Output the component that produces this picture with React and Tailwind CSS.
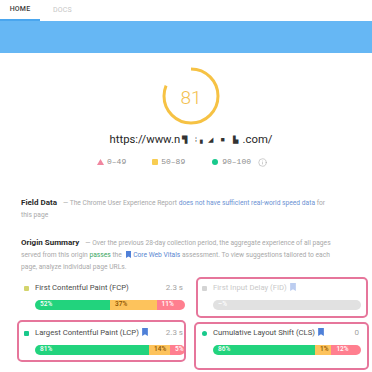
import React from 'react';
import { Info } from 'lucide-react';

const tones = {
  good: 'bg-[#22d37d] text-white',
  avg: 'bg-[#fdc35c] text-[#8a5300]',
  poor: 'bg-[#ff7f8f] text-white',
  none: 'bg-[#e1e1e1] text-white',
};

const metrics = [
  {
    name: 'First Contentful Paint (FCP)',
    value: '2.3 s',
    markerClass: 'bg-[#d3d46c] rounded-[1px]',
    segments: [
      { label: '52%', width: 50, tone: 'good' },
      { label: '37%', width: 31, tone: 'avg' },
      { label: '11%', width: 19, tone: 'poor' },
    ],
  },
  {
    name: 'First Input Delay (FID)',
    faded: true,
    badge: true,
    markerClass: 'bg-[#d4d4d4] rounded-[1px]',
    box: 'left-[1px] -right-[6px] -top-[5px] h-[41px]',
    segments: [{ label: '–%', width: 100, tone: 'none' }],
  },
  {
    name: 'Largest Contentful Paint (LCP)',
    value: '2.3 s',
    badge: true,
    markerClass: 'bg-[#18c98b] rounded-[1px]',
    box: 'left-0 right-0 -top-[7px] h-[42px]',
    segments: [
      { label: '81%', width: 76, tone: 'good' },
      { label: '14%', width: 14, tone: 'avg' },
      { label: '5%', width: 10, tone: 'poor' },
    ],
  },
  {
    name: 'Cumulative Layout Shift (CLS)',
    value: '0',
    badge: true,
    markerClass: 'bg-[#18c98b] rounded-full',
    box: '-left-[1px] -right-[7px] -top-[5px] h-[48px]',
    segments: [
      { label: '86%', width: 69, tone: 'good' },
      { label: '1%', width: 11, tone: 'avg' },
      { label: '12%', width: 20, tone: 'poor' },
    ],
  },
];

const Badge = ({ faded, big }) => (
  <svg
    width={big ? 6 : 5}
    height={big ? 8 : 7}
    viewBox="0 0 5 7"
    className="inline-block ml-[3px] align-[-1px]"
  >
    <path d="M0 0h5v7L2.5 5.4 0 7z" fill={faded ? '#bccdf0' : '#4f80d8'} />
  </svg>
);

const Metric = ({ m }) => (
  <div className="relative h-[45px]">
    {m.box && <div className={`absolute rounded-[5px] border-2 border-[#e6769b] pointer-events-none ${m.box}`} />}
    <div className="flex items-center h-[12px] pr-[3px]">
      <div className="w-[18px] pl-[7px] flex items-center">
        <span className={`block w-[5px] h-[5px] ${m.markerClass}`} />
      </div>
      <span className={`text-[7.7px] whitespace-nowrap ${m.faded ? 'text-[#c9c9c9]' : 'text-[#4a4a4a]'}`}>
        {m.name}
        {m.badge && <Badge faded={m.faded} big />}
      </span>
      {m.value && <span className="ml-auto whitespace-nowrap text-[8px] text-[#a3a3a3]">{m.value}</span>}
    </div>
    <div className="mt-[6px] ml-[18px] mr-[1px] h-[10px] rounded-full overflow-hidden flex">
      {m.segments.map((s) => (
        <div
          key={s.label}
          className={`h-full flex items-center pl-[5px] text-[6.5px] font-medium ${tones[s.tone]}`}
          style={{ width: `${s.width}%` }}
        >
          {s.label}
        </div>
      ))}
    </div>
  </div>
);

export default function App() {
  return (
    <div className="w-[372px] h-[372px] overflow-hidden bg-white font-[Roboto,sans-serif]">
      {/* tabs */}
      <div className="h-[21px] flex">
        <div className="w-[40px] h-full flex items-center justify-center border-b-2 border-[#4aa6ee] text-[7px] font-medium text-[#3d3d3d] tracking-[0.2px]">
          HOME
        </div>
        <div className="w-[45px] h-full flex items-center justify-center text-[7px] text-[#c6c6c6] tracking-[0.2px]">
          DOCS
        </div>
      </div>
      <div className="h-[32px] bg-[#66b7f4]" />

      {/* score */}
      <div className="pl-[10px] flex flex-col items-center">
        <div className="relative mt-[13px] w-[60px] h-[60px]">
          <svg width="60" height="60" viewBox="0 0 60 60" className="absolute inset-0">
            <circle
              cx="30"
              cy="30"
              r="27"
              fill="none"
              stroke="#f6c244"
              strokeWidth="3"
              strokeDasharray="137.4 169.6"
              transform="rotate(-90 30 30)"
            />
          </svg>
          <div className="absolute inset-0 flex items-center justify-center pt-[4px] text-[19px] font-light text-[#f3c04d]">
            81
          </div>
        </div>
        <div className="mt-[5px] h-[18px] flex items-center text-[11.3px] text-[#262626]">
          https://www.n
          <span className="mx-[2px] text-[7px] tracking-[3px] text-[#333]">▜ ⁞▖◢ ■ ▙</span>
          .com/
        </div>
      </div>

      {/* legend */}
      <div className="mt-[7px] h-[12px] flex items-center pl-[97px] font-['Liberation_Mono',monospace] text-[8px] text-[#8e8e8e]">
        <svg width="7" height="6" viewBox="0 0 7 6">
          <path d="M3.5 0L7 6H0z" fill="#f0869f" />
        </svg>
        <span className="ml-[3px]">0–49</span>
        <span className="ml-[26px] w-[6px] h-[6px] rounded-[1px] bg-[#f8cd52]" />
        <span className="ml-[3px]">50–89</span>
        <span className="ml-[27px] w-[6px] h-[6px] rounded-full bg-[#18c98c]" />
        <span className="ml-[4px]">90–100</span>
        <Info size={9} strokeWidth={1.5} className="ml-[7px] text-[#a8a8a8]" />
      </div>

      {/* text */}
      <div className="mt-[29px] pl-[21px] text-[6.7px] leading-[12px] text-[#a9a9a9]">
        <div>
          <span className="text-[8px] font-bold text-[#2a2a2a]">Field Data</span>
          <span className="ml-[6px]">
            — The Chrome User Experience Report{' '}
            <span className="text-[#6d93d3]">does not have sufficient real-world speed data</span> for
          </span>
          <br />
          this page
        </div>
        <div className="mt-[16px]">
          <span className="text-[8px] font-bold text-[#2a2a2a]">Origin Summary</span>
          <span className="ml-[6px]">
            — Over the previous 28-day collection period, the aggregate experience of all pages
          </span>
          <br />
          served from this origin <span className="text-[#3aa75f]">passes</span> the{' '}
          <span className="text-[#5b87d1]">
            <Badge />
            {' '}Core Web Vitals
          </span>{' '}
          assessment. To view suggestions tailored to each
          <br />
          page, analyze individual page URLs.
        </div>
      </div>

      {/* metrics */}
      <div className="mt-[9px] ml-[17px] grid grid-cols-[169px_167px] gap-x-[9px]">
        {metrics.map((m) => (
          <Metric key={m.name} m={m} />
        ))}
      </div>
    </div>
  );
}
